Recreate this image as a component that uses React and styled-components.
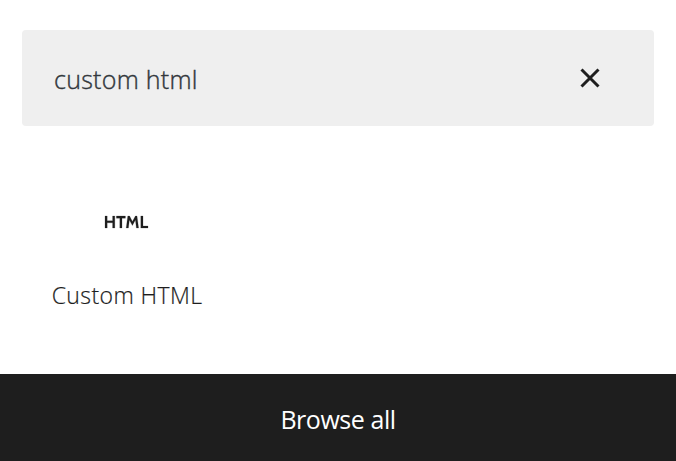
import React from "react";
import styled, { createGlobalStyle } from "styled-components";

const GlobalStyle = createGlobalStyle`
  * { box-sizing: border-box; }
  body { margin: 0; background: #fff; font-family: "Open Sans", "Noto Sans", sans-serif; color: #1e1e1e; }
`;

const Inserter = styled.main`
  display: flex;
  flex-direction: column;
  width: 676px;
  height: 461px;
  padding-top: 30px;
  overflow: hidden;
`;

const SearchBar = styled.div`
  display: flex;
  align-items: center;
  justify-content: space-between;
  height: 96px;
  margin: 0 22px;
  padding: 0 48px 0 32px;
  background: #efefef;
  border-radius: 4px;
`;

const Query = styled.span`
  padding-top: 2px;
  font-size: 25px;
  font-weight: 300;
  line-height: 36px;
  letter-spacing: 0.27px;
  color: #32373c;
  -webkit-text-stroke: 0.4px #32373c;
  white-space: nowrap;
`;

const ClearButton = styled.button`
  display: flex;
  padding: 0;
  border: 0;
  background: none;
`;

const Results = styled.div`
  display: flex;
  flex: 1;
  padding: 56px 22px 0;
`;

const BlockItem = styled.button`
  display: flex;
  flex-direction: column;
  align-items: center;
  width: 210px;
  padding: 16px 0 0;
  border: 0;
  background: none;
`;

const BlockIcon = styled.svg`
  display: block;
  width: 48px;
  height: 48px;
`;

const BlockTitle = styled.span`
  margin-top: 33px;
  font-family: "Open Sans", "Noto Sans", sans-serif;
  font-size: 23px;
  font-weight: 300;
  line-height: 32px;
  letter-spacing: 0.4px;
  color: #1e1e1e;
  -webkit-text-stroke: 0.2px #1e1e1e;
  white-space: nowrap;
`;

const BrowseButton = styled.button`
  height: 87px;
  padding: 3px 0 0;
  border: 0;
  background: #1e1e1e;
  color: #fff;
  font-family: "Open Sans", "Noto Sans", sans-serif;
  font-size: 25px;
  letter-spacing: -0.45px;
`;

export default function App() {
  return (
    <>
      <GlobalStyle />
      <Inserter>
        <SearchBar>
          <Query>custom html</Query>
          <ClearButton aria-label="Reset search">
            <svg width="32" height="32" viewBox="0 0 32 32" fill="none" stroke="#1e1e1e" strokeWidth="3">
              <path d="M7.5 7.5L24.5 24.5M24.5 7.5L7.5 24.5" />
            </svg>
          </ClearButton>
        </SearchBar>
        <Results>
          <BlockItem>
            <BlockIcon viewBox="0 0 24 24" fill="#1e1e1e" stroke="#1e1e1e" strokeWidth="0.1">
              <path d="M4.8 11.4H2.1V9H1v6h1.1v-2.6h2.7V15h1.1V9H4.8v2.4zm1.9-1.3h1.7V15h1.1v-4.9h1.7V9H6.7v1.1zM16.2 9l-1.5 2.7L13.3 9h-.9l-.8 6h1.1l.5-4 1.5 2.8 1.5-2.8.5 4h1.1L17 9h-.8zm3.8 5V9h-1.1v6h3.6v-1H20z" />
            </BlockIcon>
            <BlockTitle>Custom HTML</BlockTitle>
          </BlockItem>
        </Results>
        <BrowseButton>Browse all</BrowseButton>
      </Inserter>
    </>
  );
}
